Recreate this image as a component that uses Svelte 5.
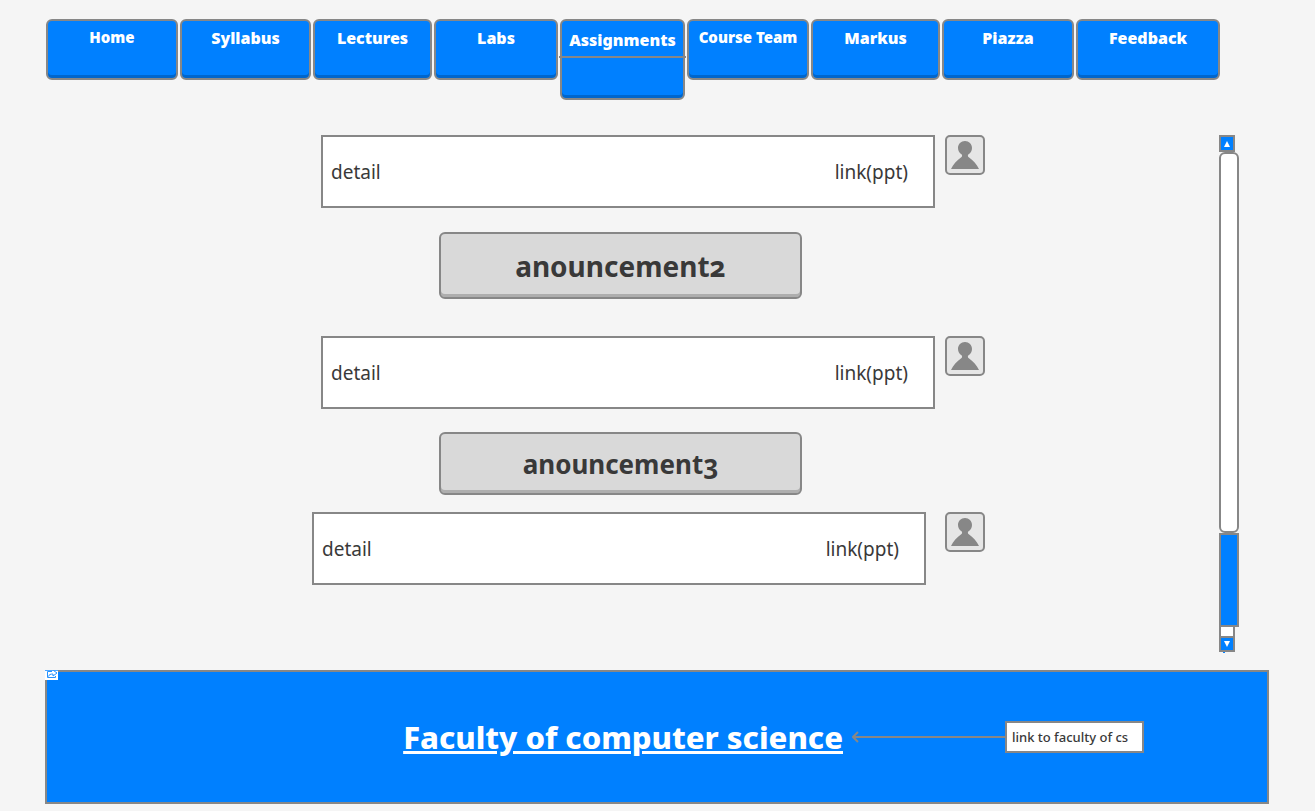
<script>
  const tabs = [
    { label: 'Home', size: 'small' },
    { label: 'Syllabus', size: 'medium' },
    { label: 'Lectures', size: 'medium' },
    { label: 'Labs', size: 'medium' },
    { label: 'Assignments', size: 'large' },
    { label: 'Course Team', size: 'small' },
    { label: 'Markus', size: 'medium' },
    { label: 'Piazza', size: 'medium' },
    { label: 'Feedback', size: 'medium' }
  ];
</script>

{#snippet detail(wide)}
  <article class="row" class:wide>
    <div class="card">
      <span>detail</span>
      <a href="#ppt">link(ppt)</a>
    </div>
    <button class="avatar" aria-label="Profile">
      <svg viewBox="0 0 36 36" aria-hidden="true">
        <path d="M18 4C22 4 25 7 25 11C25 14 23.500 16 21.500 17.200C20.500 18 20.800 19.500 21.800 20.300C26 23.500 30 27.500 32 32H4C6 27.500 10 23.500 14.200 20.300C15.200 19.500 15.500 18 14.500 17.200C12.500 16 11 14 11 11C11 7 14 4 18 4z" />
      </svg>
    </button>
  </article>
{/snippet}

<div class="page">
  <nav>
    {#each tabs as tab}
      <button class="tab {tab.size}"><span>{tab.label}</span></button>
    {/each}
  </nav>

  <main>
    <section class="feed">
      {@render detail(false)}
      <button class="heading first">anouncement2</button>
      {@render detail(false)}
      <button class="heading second">anouncement3</button>
      {@render detail(true)}
    </section>

    <div class="scroll">
      <button class="step" aria-label="Scroll up">
        <svg viewBox="0 0 12 12" aria-hidden="true"><path d="M6 3l3 6H3z" /></svg>
      </button>
      <div class="thumb"></div>
      <div class="fill"></div>
      <div class="gap"></div>
      <button class="step last" aria-label="Scroll down">
        <svg viewBox="0 0 12 12" aria-hidden="true"><path d="M6 9L3 3h6z" /></svg>
      </button>
      <div class="tick"></div>
    </div>
  </main>

  <footer>
    <svg class="badge" viewBox="0 0 13 10" aria-hidden="true">
      <path fill="#fff" d="M0 0h13v10H0z" />
      <path fill="#4da6ff" d="M0 0h13v1H0z" />
      <path fill="none" stroke="#2693ff" d="M7 1.500H2.500v6h8V6M3.500 6.500C4 4.500 5.500 4 8 4v2l4-3-3.500-2.500" />
    </svg>
    <a class="faculty" href="#faculty">Faculty of computer science</a>
    <svg class="arrow" viewBox="0 0 153 12" aria-hidden="true">
      <path d="M153 6H2M6 1L1 6l5 5" />
    </svg>
    <span class="note">link to faculty of cs</span>
  </footer>
</div>

<style>
  :global(body) {
    margin: 0;
    background: #f5f5f5;
  }
  .page {
    font-family: 'Noto Sans', sans-serif;
    color: #393939;
    padding: 19px 46px 7px 45px;
  }
  .page * {
    box-sizing: border-box;
  }
  button {
    font: inherit;
    color: inherit;
    margin: 0;
    padding: 0;
    cursor: pointer;
  }
  a {
    color: inherit;
    text-decoration: none;
  }
  nav {
    display: grid;
    grid-template-columns: 132fr 131fr 119fr 124fr 125fr 122fr 129fr 132fr 144fr;
    gap: 2px;
    align-items: start;
    height: 81px;
    margin: 0 49px 0 1px;
  }
  .tab {
    position: relative;
    display: flex;
    justify-content: center;
    align-items: flex-start;
    height: 61px;
    padding-top: 6px;
    border: 2px solid #878787;
    border-radius: 6px;
    background: #0080ff;
    box-shadow: inset 0 -3px #0066cc;
    color: #fff;
    font-weight: 900;
    font-size: 16px;
    line-height: 22px;
    white-space: nowrap;
  }
  .tab.small {
    font-size: 15px;
    line-height: 20px;
  }
  .tab.large {
    height: 81px;
    line-height: 26px;
  }
  .tab.large::after {
    content: '';
    position: absolute;
    left: -3px;
    right: -3px;
    top: 35px;
    height: 2px;
    background: #878787;
  }
  main {
    display: flex;
    align-items: flex-start;
    justify-content: space-between;
    padding: 35px 30px 17px 33px;
  }
  .feed {
    flex: 1;
    display: flex;
    flex-direction: column;
    align-items: center;
  }
  .row {
    display: flex;
    align-items: flex-start;
    justify-content: flex-end;
    gap: 10px;
    width: 673px;
  }
  .row.wide {
    gap: 19px;
  }
  .card {
    display: flex;
    flex: 0 0 614px;
    align-items: center;
    justify-content: space-between;
    height: 73px;
    padding: 0 25px 0 8px;
    border: 2px solid #878787;
    background: #fff;
    font-size: 19px;
  }
  .avatar {
    width: 40px;
    height: 40px;
    border: 2px solid #878787;
    border-radius: 5px;
    background: #e6e6e6;
  }
  .avatar svg {
    display: block;
    fill: #878787;
  }
  .heading {
    width: 363px;
    margin-right: 56px;
    border: 2px solid #878787;
    border-radius: 6px;
    background: #d9d9d9;
    box-shadow: inset 0 -3px #aeaeae;
    font-weight: 700;
    font-size: 28px;
    font-variant-numeric: oldstyle-nums;
  }
  .first {
    height: 67px;
    margin-top: 24px;
    margin-bottom: 37px;
  }
  .second {
    height: 63px;
    margin-top: 23px;
    margin-bottom: 17px;
    font-size: 26px;
  }
  .scroll {
    display: flex;
    flex-direction: column;
    align-items: flex-start;
    width: 20px;
    height: 518px;
  }
  .step {
    width: 16px;
    height: 17px;
    flex: none;
    border: 2px solid #878787;
    background: #0080ff;
  }
  .step.last {
    height: 16px;
  }
  .step svg {
    display: block;
    width: 12px;
    height: 12px;
    fill: #fff;
  }
  .tick {
    width: 2px;
    height: 1px;
    margin-left: 4px;
    background: #0080ff;
  }
  .gap {
    width: 16px;
    height: 9px;
    border: solid #878787;
    border-width: 0 2px;
    background: #fff;
  }
  .thumb {
    flex: 1;
    width: 20px;
    border: 2px solid #878787;
    border-radius: 6px;
    background: #fff;
  }
  .fill {
    width: 20px;
    height: 94px;
    border: 2px solid #878787;
    background: #0080ff;
  }
  footer {
    position: relative;
    display: flex;
    align-items: center;
    justify-content: flex-end;
    height: 134px;
    padding-right: 123px;
    border: 2px solid #878787;
    background: #0080ff;
  }
  .badge {
    position: absolute;
    left: -2px;
    top: -2px;
    width: 13px;
    height: 10px;
  }
  .faculty {
    color: #fff;
    font-weight: 800;
    font-size: 31px;
    text-decoration: underline;
    text-decoration-thickness: 3px;
    white-space: nowrap;
  }
  .arrow {
    width: 153px;
    height: 12px;
    margin-left: 9px;
    fill: none;
    stroke: #878787;
    stroke-width: 2;
  }
  .note {
    width: 139px;
    padding: 4px 5px;
    border: 2px solid #878787;
    background: #fff;
    font-weight: 500;
    font-size: 13px;
    line-height: 20px;
    white-space: nowrap;
  }
</style>
